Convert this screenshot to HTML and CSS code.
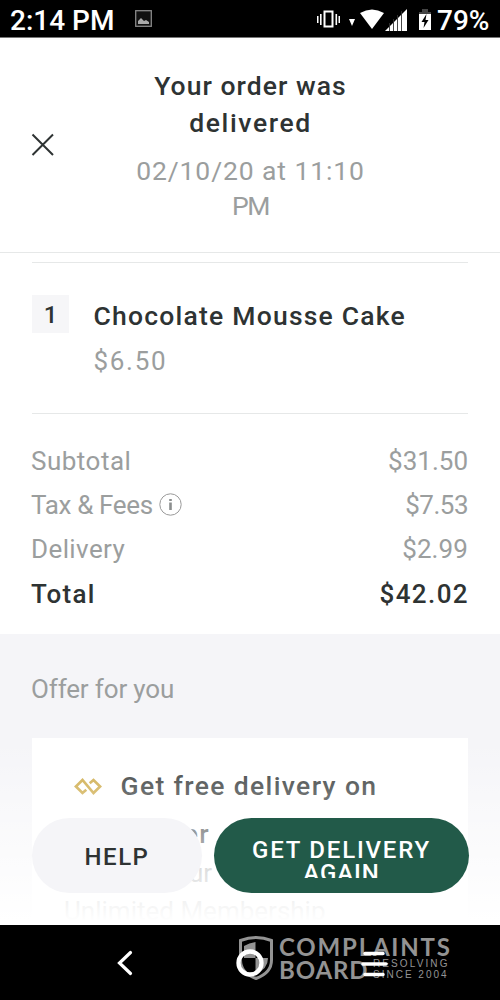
FILE: index.html
```html
<!DOCTYPE html>
<html lang="en">
<head>
<meta charset="utf-8">
<title>Your order was delivered</title>
<link rel="stylesheet" href="styles.css">
</head>
<body>
<div class="phone">
  <div class="status">
    <span class="clock">2:14 PM</span>
    <svg class="photo" width="17" height="17" viewBox="0 0 17 17"><rect x=".7" y=".7" width="15.6" height="15.6" fill="#111" stroke="#888" stroke-width="1.3"/><path d="M3 14v-3l3-3 3 3 2-1 3 2v2z" fill="#aaa"/></svg>
    <svg class="signals" width="116" height="26" viewBox="0 0 116 26" fill="#fff">
      <rect x="8.5" y="2.5" width="8" height="15" fill="none" stroke="#fff" stroke-width="2"/>
      <path d="M1 7h1.5v7H1zM4 5h1.6v11H4zM19.5 5h1.6v11h-1.6zM22.5 7H24v7h-1.500zM33 10h6l-3 7zM44 4Q56-3 68 4L56 20z"/>
      <path d="M69 22 91 0V22z"/>
      <path d="M73.500 14v8M77.500 10v12M81.500 6v16M85.500 2v20" stroke="#333" stroke-width=".9"/>
      <path d="M106 0h6v3h-6zM103 3h12v4h-12z" fill="#444"/><path d="M103 5h12v16h-12z"/>
      <path d="m110.500 5-5 8h3l-1 6 5-8h-3z" fill="#000"/>
    </svg>
    <span class="percent">79%</span>
  </div>
  <header class="head">
    <svg class="close" width="24" height="24" viewBox="0 0 24 24"><path d="M1.500 1.500 22 22M22 1.500 1.500 22" stroke="#2e3333" stroke-width="2" fill="none"/></svg>
    <div class="heading">
      <h1 class="title">Your order was<br><span class="title-end">delivered</span></h1>
      <p class="date">02/10/20 at 11:10<br><span class="pm">PM</span></p>
    </div>
  </header>
  <main class="order">
    <div class="item">
      <span class="qty">1</span>
      <div class="info">
        <div class="name">Chocolate Mousse Cake</div>
        <div class="price">$6.50</div>
      </div>
    </div>
    <div class="totals">
      <div class="row"><span class="sub-label">Subtotal</span><span class="amount a1">$31.50</span></div>
      <div class="row"><span class="tax-label">Tax &amp; Fees</span>
        <svg class="hint" width="23" height="23" viewBox="0 0 23 23"><circle cx="11.500" cy="11.500" r="10.700" fill="none" stroke="#999" stroke-width="1"/><path d="M10.200 6h2.600v2h-2.600zM10.200 9.500h2.600V17h-2.600z" fill="#8b8e8e"/></svg>
        <span class="amount a2">$7.53</span></div>
      <div class="row"><span class="del-label">Delivery</span><span class="amount a3">$2.99</span></div>
      <div class="row total"><span class="total-label">Total</span><span class="amount a4">$42.02</span></div>
    </div>
  </main>
  <section class="offer">
    <h2 class="offer-title">Offer for you</h2>
    <div class="card">
      <div class="promo">
        <svg class="plus" width="28" height="17" viewBox="0 0 28 17"><path d="M12.300 11.800 8.500 15 1.900 8.500 8.500 2 19.500 15 26.100 8.500 19.500 2 15.700 5.200" fill="none" stroke="#cba63e" stroke-width="2.700"/></svg>
        <div class="promo-text">Get free delivery on<br><span class="promo-second">order</span></div>
      </div>
      <p class="terms"><span class="terms-first">Try with your</span><br>Unlimited Membership</p>
    </div>
    <div class="fade"></div>
    <div class="actions">
      <button class="btn help">HELP</button>
      <button class="btn again"><span class="again-text">GET DELIVERY<br><span class="again-word">AGAIN</span></span></button>
    </div>
  </section>
  <nav class="nav">
    <svg class="nav-icon nav-back" width="16" height="26" viewBox="0 0 16 26"><path d="M13.500 2.500 2.500 13 13.500 23.500" fill="none" stroke="#fff" stroke-width="3.200" stroke-linecap="round"/></svg>
    <svg class="nav-icon nav-home" width="28" height="28" viewBox="0 0 28 28"><circle cx="14" cy="14" r="11.500" fill="none" stroke="#fff" stroke-width="4.300"/></svg>
    <svg class="nav-icon nav-menu" width="28" height="26" viewBox="0 0 28 26"><path d="M4 2.500h18M2 13h23M4 23.500h18" stroke="#fff" stroke-width="3.500" stroke-linecap="round"/></svg>
    <div class="mark">
      <svg class="shield" width="36" height="46" viewBox="0 0 36 46"><path d="M2.500 5.500Q18-.5 33.500 5.500V25Q33.500 38 18 43.500Q2.500 38 2.500 25z" fill="none" stroke="#a0a0a0" stroke-width="3"/><path d="M6 11Q11 8 17.500 7V23H6zM17.500 23H30Q30 34 17.500 39z" fill="#a0a0a0"/></svg>
      <div class="mark-text">
        <div class="mark-top">COMPLAINTS</div>
        <div class="mark-row"><span class="mark-board">BOARD</span><div class="mark-small"><div class="resolving">RESOLVING</div><div class="since">SINCE 2004</div></div></div>
      </div>
    </div>
  </nav>
</div>
</body>
</html>
```
FILE: styles.css
```css
* { box-sizing: border-box; margin: 0; padding: 0; }
body { background: #fff; font-family: Roboto, "Liberation Sans", sans-serif; font-size: 26px; color: #2e3333; }
.phone { width: 500px; height: 1000px; display: flex; flex-direction: column; overflow: hidden; white-space: nowrap; }
svg { display: block; flex: none; }

.status { height: 38px; background: #000; border-bottom: 1px solid #777; display: flex; align-items: flex-start; color: #fff; flex: none; }
.clock { margin-left: 10px; width: 125px; font-size: 28px; font-weight: 500; line-height: 42px; }
.photo { margin-top: 10px; }
.signals { margin: 9px 0 0 164px; }
.percent { margin-left: 5px; font-size: 28px; font-weight: 500; line-height: 42px; }

.head { height: 215px; border-bottom: 1px solid #e6e8e8; display: flex; padding: 29px 0 0 31px; flex: none; }
.close { margin-top: 66px; }
.heading { width: 391px; text-align: center; }
.title { font-size: 26.500px; font-weight: 500; line-height: 37px; letter-spacing: 1.050px; }
.title-end { letter-spacing: 1.600px; }
.date { margin-top: 12px; font-size: 26.500px; line-height: 35px; color: #9b9e9e; letter-spacing: .9px; }
.pm { letter-spacing: -1.500px; }

.order { height: 381px; padding: 9px 32px 0; flex: none; }
.item { height: 152px; border-top: 1px solid #e6e8e8; border-bottom: 1px solid #e6e8e8; display: flex; padding-top: 32px; }
.qty { width: 37px; height: 38px; background: #f6f6f8; text-align: center; font-size: 24px; font-weight: 500; line-height: 41px; }
.info { margin-left: 24.500px; margin-top: -1px; }
.name { font-size: 26.500px; font-weight: 500; line-height: 44px; letter-spacing: 1.220px; }
.price { font-size: 26px; line-height: 47px; color: #9b9e9e; letter-spacing: 1.700px; }
.totals { padding-top: 25px; margin-left: -1px; }
.row { display: flex; height: 44px; align-items: center; font-size: 26px; color: #9b9e9e; letter-spacing: .5px; }
.tax-label { letter-spacing: -.35px; }
.del-label { letter-spacing: .4px; }
.amount { margin-left: auto; }
.a1 { letter-spacing: 0; }
.a2 { letter-spacing: -.5px; }
.a3 { letter-spacing: .1px; }
.a4 { letter-spacing: 1.400px; margin-right: -1px; }
.hint { margin-left: 6px; margin-top: -2px; }
.total { height: 46px; color: #2e3333; font-weight: 500; }
.total-label { letter-spacing: 1.300px; }

.offer { position: relative; height: 291px; background: #f5f5f8; padding: 33px 32px 0; overflow: hidden; flex: none; }
.offer-title { font-size: 26px; font-weight: 400; line-height: 44px; color: #9b9e9e; letter-spacing: -.15px; margin-left: -1px; }
.card { margin-top: 27px; height: 220px; background: #fff; padding: 24px 32px 0; }
.promo { display: flex; padding-left: 10px; }
.plus { margin-top: 16px; }
.promo-text { margin-left: 18.500px; font-size: 26.500px; font-weight: 500; line-height: 48px; letter-spacing: 1.350px; }
.promo-second { padding-left: 20px; }
.terms { margin-top: -4px; font-size: 26px; line-height: 38px; color: #8b8e8e; letter-spacing: 0; }
.terms-first { letter-spacing: .05px; }
.fade { position: absolute; inset: 106px 0 0; background: linear-gradient(rgba(255,255,255,0), #fff 98%); }
.actions { position: absolute; left: 32px; top: 184px; display: flex; gap: 12px; }
.btn { height: 75px; border: 0; border-radius: 38px; font-family: Roboto, sans-serif; font-size: 24px; font-weight: 500; }
.help { width: 170px; background: #f5f5f8; color: #2e3333; letter-spacing: 1.500px; padding-top: 2px; }
.again { width: 255px; background: #225a49; color: #fff; }
.again-text { display: block; height: 39px; margin-top: 6px; overflow: hidden; line-height: 23px; letter-spacing: 1.800px; }
.again-word { letter-spacing: .9px; }

.nav { position: relative; height: 75px; background: #000; display: flex; align-items: flex-start; flex: none; }
.nav-icon { position: relative; z-index: 1; }
.nav-back { margin: 25px 0 0 117px; }
.nav-home { margin: 24px 0 0 103px; }
.nav-menu { margin: 26px 0 0 97px; }
.mark { position: absolute; left: 238px; top: 10px; display: flex; color: #a0a0a0; opacity: .92; }
.mark-text { margin-left: 5px; font-family: Lato, sans-serif; font-weight: 700; font-size: 24px; line-height: 23px; }
.mark-top { letter-spacing: 1.800px; }
.mark-row { display: flex; }
.mark-board { width: 94px; letter-spacing: .9px; }
.mark-small { font-family: "Liberation Sans", sans-serif; font-weight: 400; font-size: 10px; line-height: 11px; letter-spacing: 2.100px; }
.since { letter-spacing: 2px; }
```
